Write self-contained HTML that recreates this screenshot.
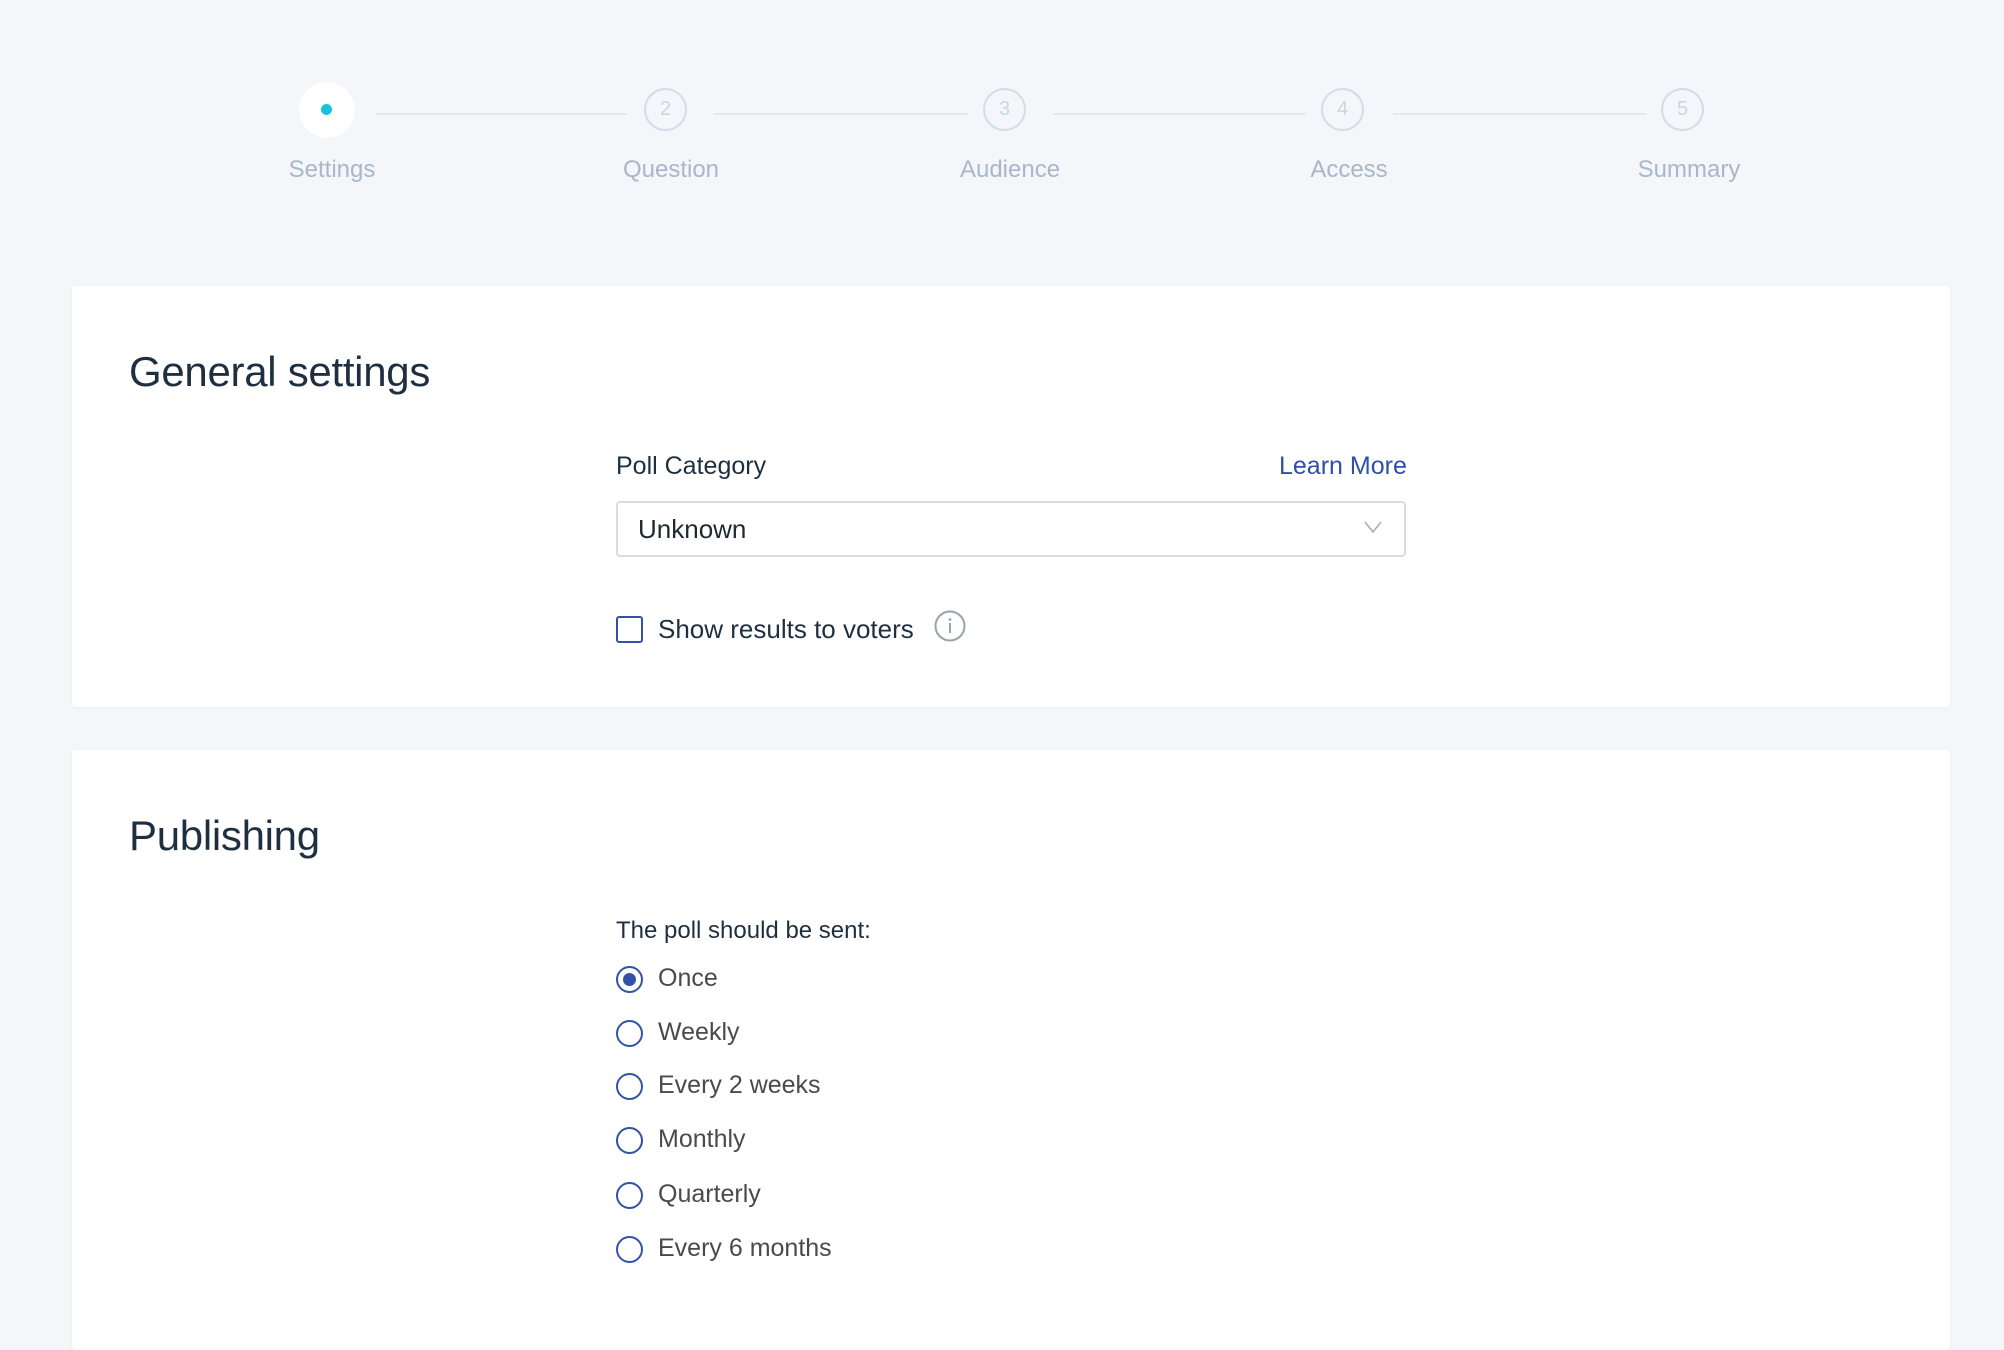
<!DOCTYPE html>
<html><head><meta charset="utf-8"><style>
*{margin:0;padding:0;box-sizing:border-box}
body{width:2004px;height:1304px;background:#f4f6fa;font-family:"Liberation Sans",sans-serif;position:relative;overflow:hidden;color:#1e3040}
.a{position:absolute}
.line{position:absolute;height:2px;background:#e4e7eb;top:113px}
.c{position:absolute;width:43px;height:43px;border:2px solid #d3dce8;border-radius:50%;color:#ccd5e2;font-size:20px;text-align:center;line-height:39px;top:88px}
.lbl{position:absolute;top:156px;font-size:24px;color:#a8b7cb;transform:translateX(-50%);white-space:nowrap}
.card{position:absolute;left:72px;width:1878px;background:#fff;border-radius:4px;box-shadow:0 1px 3px rgba(0,0,0,.04)}
h2{position:absolute;left:129px;font-size:42px;font-weight:normal;color:#1e3040;letter-spacing:-0.3px}
.r{position:absolute;left:616px;width:27px;height:27px;border:2px solid #3152a8;border-radius:50%}
.rt{position:absolute;left:658px;font-size:25px;color:#4a4a4a}
</style></head><body>
<div class="a" style="left:299px;top:82px;width:56px;height:56px;border-radius:50%;background:#fff"></div>
<div class="a" style="left:321px;top:104px;width:11px;height:11px;border-radius:50%;background:#17c3dc"></div>
<div class="line" style="left:376px;width:251px"></div>
<div class="line" style="left:714px;width:254px"></div>
<div class="line" style="left:1053px;width:253px"></div>
<div class="line" style="left:1393px;width:253px"></div>
<div class="c" style="left:644px">2</div>
<div class="c" style="left:983px">3</div>
<div class="c" style="left:1321px">4</div>
<div class="c" style="left:1661px">5</div>
<div class="lbl" style="left:332px">Settings</div>
<div class="lbl" style="left:671px">Question</div>
<div class="lbl" style="left:1010px">Audience</div>
<div class="lbl" style="left:1349px">Access</div>
<div class="lbl" style="left:1689px">Summary</div>

<div class="card" style="top:286px;height:421px"></div>
<h2 style="top:348px">General settings</h2>
<div class="a" style="left:616px;top:452px;font-size:25px">Poll Category</div>
<div class="a" style="left:1279px;top:452px;font-size:25px;color:#2f4fa8">Learn More</div>
<div class="a" style="left:616px;top:501px;width:790px;height:56px;border:2px solid #dcdcdc;border-radius:4px"></div>
<div class="a" style="left:638px;top:514px;font-size:26px;color:#1e2a30">Unknown</div>
<svg class="a" style="left:1364px;top:520px" width="18" height="14"><path d="M1 2 L9 12 L17 2" fill="none" stroke="#aaa" stroke-width="1.5"/></svg>
<div class="a" style="left:616px;top:616px;width:27px;height:27px;border:2px solid #3152a8;border-radius:3px"></div>
<div class="a" style="left:658px;top:614px;font-size:26px">Show results to voters</div>
<svg class="a" style="left:934px;top:610px" width="32" height="32"><circle cx="16" cy="16" r="14.5" fill="none" stroke="#98a3b0" stroke-width="2"/><circle cx="16" cy="9.5" r="1.4" fill="#98a3b0"/><path d="M16 13v10" stroke="#98a3b0" stroke-width="2"/></svg>

<div class="card" style="top:750px;height:600px"></div>
<h2 style="top:812px">Publishing</h2>
<div class="a" style="left:616px;top:917px;font-size:24px">The poll should be sent:</div>
<div class="r" style="top:966px"></div><div class="a" style="left:623px;top:973px;width:13px;height:13px;border-radius:50%;background:#3152a8"></div>
<div class="rt" style="top:964px">Once</div>
<div class="r" style="top:1020px"></div><div class="rt" style="top:1018px">Weekly</div>
<div class="r" style="top:1073px"></div><div class="rt" style="top:1071px">Every 2 weeks</div>
<div class="r" style="top:1127px"></div><div class="rt" style="top:1125px">Monthly</div>
<div class="r" style="top:1182px"></div><div class="rt" style="top:1180px">Quarterly</div>
<div class="r" style="top:1236px"></div><div class="rt" style="top:1234px">Every 6 months</div>
</body></html>
